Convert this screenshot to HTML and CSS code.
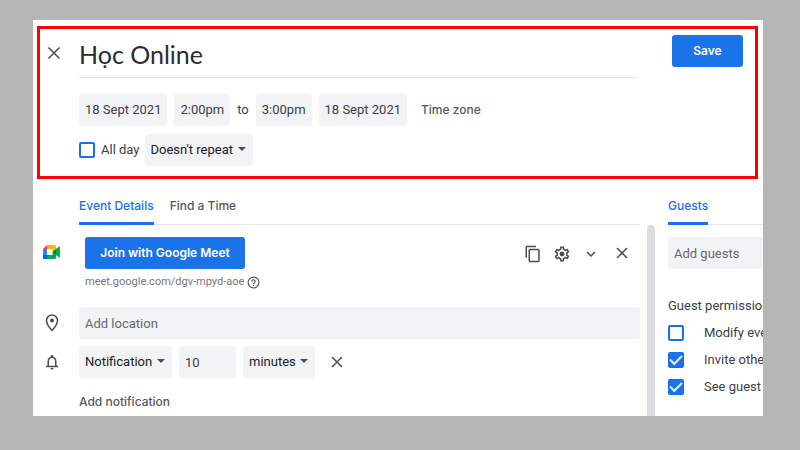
FILE: index.html
```html
<!DOCTYPE html>
<html lang="en">
<head>
    <meta charset="UTF-8">
    <meta name="viewport" content="width=device-width, initial-scale=1.0">
    <title>Học Online - Event details</title>
    <link rel="stylesheet" href="styles.css">
</head>
<body>
    <main class="panel">
        <header class="event-header">
            <button class="icon-button close" aria-label="Close">
                <svg width="14" height="14" viewBox="0 0 14 14"><path d="M1.5 1.5l11 11M12.5 1.5l-11 11"/></svg>
            </button>
            <div class="event-main">
                <input class="title" type="text" value="Học Online" aria-label="Title">
                <div class="row times">
                    <button class="field">18 Sept 2021</button>
                    <button class="field">2:00pm</button>
                    <span>to</span>
                    <button class="field">3:00pm</button>
                    <button class="field">18 Sept 2021</button>
                    <button class="text-button time-zone">Time zone</button>
                </div>
                <div class="row repeat">
                    <label class="check"><input type="checkbox"> All day</label>
                    <span class="select">
                        <select aria-label="Repeat"><option>Doesn't repeat</option></select>
                    </span>
                </div>
            </div>
            <button class="primary save">Save</button>
        </header>

        <div class="columns">
            <section class="details">
                <nav class="tabs">
                    <a class="tab active" href="#details">Event Details</a>
                    <a class="tab" href="#find">Find a Time</a>
                </nav>

                <div class="line meet">
                    <svg class="line-icon" width="17" height="14" viewBox="0 0 17 14">
                        <path fill="#ea4335" d="M0 4L4 0v4z"/>
                        <path fill="#2684fc" d="M0 4h4v6H0z"/>
                        <path fill="#0066da" d="M0 10h4v4H1.500A1.500 1.500 0 0 1 0 12.500z"/>
                        <path fill="#ffba00" d="M4 0h7.500A1.500 1.500 0 0 1 13 1.500V5L9.500 7.500V4H4z"/>
                        <path fill="#00ac47" d="M4 10h5.500V7L13 9.500v3a1.500 1.500 0 0 1-1.500 1.500H4z"/>
                        <path fill="#00832d" d="M9.500 7L13 4v6z"/>
                        <path fill="#00ac47" d="M13 4l3-2.400q.9-.5.900.500v9.800q0 1-.9.500L13 10z"/>
                    </svg>
                    <div class="meet-info">
                        <button class="primary join">Join with Google Meet</button>
                        <p class="meet-link">
                            meet.google.com/dgv-mpyd-aoe
                            <svg width="13" height="13" viewBox="0 0 24 24"><circle cx="12" cy="12" r="10"/><path d="M9 10a3 3 0 1 1 4.5 2.6c-1 .7-1.5 1.2-1.5 2.4M12 16.5v2"/></svg>
                        </p>
                    </div>
                    <div class="meet-actions">
                        <button class="icon-button" aria-label="Copy link">
                            <svg width="18" height="18" viewBox="0 0 24 24"><path class="solid" d="M16 1H4c-1.1 0-2 .9-2 2v14h2V3h12V1zm3 4H8c-1.1 0-2 .9-2 2v14c0 1.1.9 2 2 2h11c1.1 0 2-.9 2-2V7c0-1.1-.9-2-2-2zm0 16H8V7h11v14z"/></svg>
                        </button>
                        <button class="icon-button" aria-label="Settings">
                            <svg width="18" height="18" viewBox="0 0 24 24"><path class="solid" d="M19.43 12.98c.04-.32.07-.64.07-.98 0-.34-.03-.66-.07-.98l2.11-1.65c.19-.15.24-.42.12-.64l-2-3.46c-.12-.22-.39-.3-.61-.22l-2.49 1c-.52-.4-1.08-.73-1.69-.98l-.38-2.65C14.46 2.18 14.25 2 14 2h-4c-.25 0-.46.18-.49.42l-.38 2.65c-.61.25-1.17.59-1.69.98l-2.49-1c-.22-.09-.49 0-.61.22l-2 3.46c-.13.22-.07.49.12.64l2.11 1.65c-.04.32-.07.65-.07.98s.03.66.07.98l-2.11 1.65c-.19.15-.24.42-.12.64l2 3.46c.12.22.39.3.61.22l2.49-1c.52.4 1.08.73 1.69.98l.38 2.65c.03.24.24.42.49.42h4c.25 0 .46-.18.49-.42l.38-2.65c.61-.25 1.17-.59 1.69-.98l2.49 1c.22.09.49 0 .61-.22l2-3.46c.12-.22.07-.49-.12-.64l-2.11-1.65zm-1.98-1.71c.04.31.05.52.05.73s-.02.43-.05.73l-.14 1.13.89.7 1.08.84-.7 1.21-1.27-.51-1.04-.42-.9.68c-.43.32-.84.56-1.25.73l-1.06.43-.16 1.13-.2 1.35h-1.4l-.19-1.35-.16-1.13-1.06-.43c-.43-.18-.83-.41-1.23-.71l-.91-.7-1.06.43-1.27.51-.7-1.21 1.08-.84.89-.7-.14-1.13c-.03-.31-.05-.54-.05-.74s.02-.43.05-.73l.14-1.13-.89-.7-1.08-.84.7-1.21 1.27.51 1.04.42.9-.68c.43-.32.84-.56 1.25-.73l1.06-.43.16-1.13.2-1.35h1.39l.19 1.35.16 1.13 1.06.43c.43.18.83.41 1.23.71l.91.7 1.06-.43 1.27-.51.7 1.21-1.07.85-.89.7.14 1.13z"/><circle class="solid" cx="12" cy="12" r="3.2"/></svg>
                        </button>
                        <button class="icon-button" aria-label="More">
                            <svg width="10" height="10" viewBox="0 0 10 10"><path d="M1 3l4 4 4-4"/></svg>
                        </button>
                        <button class="icon-button remove" aria-label="Remove conferencing">
                            <svg width="12" height="12" viewBox="0 0 12 12"><path d="M1 1l10 10M11 1l-10 10"/></svg>
                        </button>
                    </div>
                </div>

                <div class="line location">
                    <svg class="line-icon" width="18" height="20" viewBox="0 0 18 20"><path d="M9 2a5.5 5.5 0 0 0-5.5 5.5C3.5 11.5 9 17.5 9 17.5s5.5-6 5.5-10A5.5 5.5 0 0 0 9 2z"/><circle class="solid" cx="9" cy="7.5" r="2"/></svg>
                    <input class="field" type="text" placeholder="Add location" aria-label="Location">
                </div>

                <div class="line">
                    <svg class="line-icon" width="18" height="18" viewBox="0 0 24 24"><path class="solid" d="M12 22c1.1 0 2-.9 2-2h-4c0 1.1.9 2 2 2zm6-6v-5c0-3.07-1.63-5.64-4.5-6.32V4c0-.83-.67-1.5-1.5-1.5s-1.5.67-1.5 1.5v.68C7.64 5.36 6 7.92 6 11v5l-2 2v1h16v-1l-2-2zm-2 1H8v-6c0-2.48 1.51-4.5 4-4.5s4 2.02 4 4.5v6z"/></svg>
                    <div class="row">
                        <span class="select">
                            <select aria-label="Notification type"><option>Notification</option></select>
                        </span>
                        <input class="field amount" type="text" inputmode="numeric" value="10" aria-label="Amount">
                        <span class="select">
                            <select aria-label="Unit"><option>minutes</option></select>
                        </span>
                        <button class="icon-button remove" aria-label="Remove notification">
                            <svg width="12" height="12" viewBox="0 0 12 12"><path d="M1 1l10 10M11 1l-10 10"/></svg>
                        </button>
                    </div>
                </div>
                <button class="text-button add-notification">Add notification</button>
            </section>

            <div class="scrollbar"></div>

            <aside class="guests">
                <nav class="tabs">
                    <a class="tab active" href="#guests">Guests</a>
                </nav>
                <input class="field" type="text" placeholder="Add guests" aria-label="Add guests">
                <h2>Guest permissions</h2>
                <label class="check"><input type="checkbox"> Modify event</label>
                <label class="check"><input type="checkbox" checked> Invite others</label>
                <label class="check"><input type="checkbox" checked> See guest list</label>
            </aside>
        </div>
    </main>
</body>
</html>
```

FILE: styles.css
```css
* {
    box-sizing: border-box;
}

body {
    margin: 0;
    height: 100vh;
    padding: 20px 37px 34px 33px;
    background-color: #b6b6b6;
    color: #3c4043;
    font-family: Roboto, sans-serif;
    font-size: 13px;
    line-height: 16px;
}

button,
input,
select {
    margin: 0;
    border: none;
    color: inherit;
    font: inherit;
}

svg {
    display: block;
    fill: none;
    stroke: #4a4d51;
    stroke-width: 1.5;
}

svg .solid {
    fill: #4a4d51;
    stroke: none;
}

.panel {
    display: flex;
    flex-direction: column;
    height: 100%;
    padding: 6px 0 0 4px;
    background: #fff;
    overflow: hidden;
}

/* header */
.event-header {
    display: grid;
    grid-template-columns: 39px 1fr 71px;
    align-items: start;
    margin-right: 5px;
    padding: 6px 12px 10px 0;
    border: 3px solid #fe0000;
}

.event-main {
    margin-right: 35px;
}

.title {
    display: block;
    width: 100%;
    height: 43px;
    padding: 0 0 5px;
    border-bottom: 1px solid #dfe1e5;
    background: none;
    color: #2b2d30;
    font-family: Lato, sans-serif;
    font-size: 25px;
}

.row {
    display: flex;
    align-items: center;
    gap: 7px;
}

.times {
    margin-top: 16px;
}

.repeat {
    gap: 5px;
    margin-top: 8px;
}

.field {
    height: 32px;
    padding: 0 6px;
    border-radius: 3px;
    background: #f1f3f4;
}

.field::placeholder {
    color: #66696d;
    opacity: 1;
}

.select {
    position: relative;
    color: #202124;
}

.select select {
    display: block;
    appearance: none;
    height: 32px;
    padding: 0 19px 0 6px;
    border-radius: 3px;
    background: #f1f3f4;
}

.select::after {
    content: "";
    position: absolute;
    top: 13px;
    right: 7px;
    border: 4px solid transparent;
    border-top-color: #4a4d51;
    border-bottom: none;
    pointer-events: none;
}

.text-button,
.primary,
.tab {
    font-family: Inter, sans-serif;
    font-size: 12px;
    font-weight: 500;
}

.text-button {
    padding: 0;
    background: none;
    color: #55585c;
}

.time-zone {
    margin-left: 7px;
}

.icon-button {
    display: grid;
    place-items: center;
    padding: 0;
    background: none;
}

.close {
    width: 27px;
    height: 36px;
}

.primary {
    height: 32px;
    padding: 0;
    border-radius: 3px;
    background: #1a73e8;
    color: #fff;
    font-weight: 600;
}

.check {
    display: flex;
    align-items: center;
    gap: 6px;
}

.check input {
    appearance: none;
    display: grid;
    place-items: center;
    flex: none;
    width: 16px;
    height: 16px;
    border: 2px solid #1a6ff0;
    border-radius: 2px;
}

.check input:checked {
    background: #1a73e8;
}

.check input:checked::before {
    content: "";
    width: 10px;
    height: 5px;
    margin-bottom: 3px;
    border: solid #e3eefc;
    border-width: 0 0 2px 2px;
    transform: rotate(-45deg);
}

/* body columns */
.columns {
    display: grid;
    grid-template-columns: 1fr 8px 108px;
    flex: 1;
    min-height: 0;
}

.details {
    padding: 10px 7px 0 0;
}

.tabs {
    display: flex;
    gap: 16px;
    height: 36px;
    border-bottom: 1px solid #e3e5e8;
}

.details .tabs {
    margin-left: 42px;
}

.tab {
    height: 36px;
    padding-top: 9px;
    color: #55585c;
    text-decoration: none;
}

.tab.active {
    border-bottom: 3px solid #1a6ff0;
    color: #1a6ff0;
}

.line {
    display: grid;
    grid-template-columns: 42px 1fr;
    align-items: center;
    margin-top: 7px;
}

.line-icon {
    margin-left: 6px;
}

.meet {
    grid-template-columns: 48px 1fr auto;
    align-items: start;
    margin-top: 12px;
}

.meet .line-icon {
    margin-top: 8px;
    stroke: none;
}

.join {
    width: 160px;
}

.meet-link {
    display: flex;
    align-items: center;
    gap: 3px;
    margin: 5px 0 0;
    color: #73777b;
    font-size: 11px;
}

.meet-link svg {
    stroke: #4a4d51;
    stroke-width: 2;
}

.meet-actions {
    display: flex;
    gap: 4px;
    height: 34px;
    padding-right: 3px;
}

.meet-actions .icon-button {
    width: 25px;
}

.meet-actions .remove {
    width: 30px;
}

.location {
    margin-top: 17px;
}

.amount {
    width: 57px;
}

.remove {
    width: 30px;
    height: 32px;
}

.add-notification {
    display: block;
    margin: 16px 0 0 42px;
}

.scrollbar {
    margin-top: 46px;
    border-radius: 4px 4px 0 0;
    background: #dadce0;
}

.guests {
    margin-left: 13px;
    padding: 10px 0 0;
    overflow: hidden;
    white-space: nowrap;
}

.guests .field {
    width: 100%;
    margin-top: 12px;
}

.guests h2 {
    margin: 29px 0 10px;
    font-size: 13px;
    font-weight: 400;
}

.guests .check {
    gap: 20px;
    margin-top: 11px;
}
```
